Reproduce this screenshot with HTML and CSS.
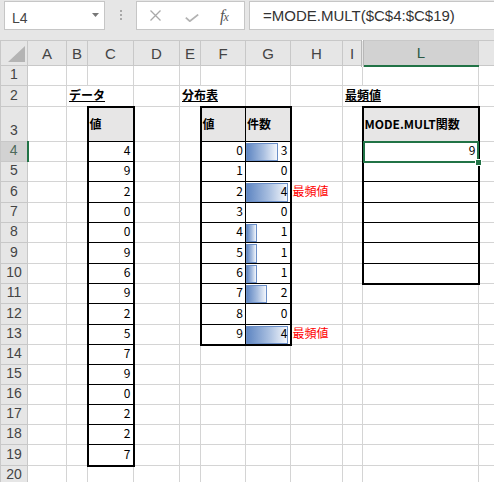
FILE: index.html
```html
<!DOCTYPE html>
<html lang="ja">
<head>
<meta charset="utf-8">
<title>MODE.MULT</title>
<link rel="stylesheet" href="styles.css">
</head>
<body>
<div class="toolbar">
  <div class="namebox"><span class="name">L4</span><svg class="dd" width="7" height="4" viewBox="0 0 7 4"><polygon points="0,0 7,0 3.5,4"/></svg></div>
  <div class="grip"><i></i><i></i><i></i></div>
  <div class="fbtns">
    <svg class="ic-x" width="11" height="11" viewBox="0 0 11 11"><path d="M0.5 0.5L10.5 10.5M10.5 0.5L0.5 10.5"/></svg>
    <svg class="ic-ok" width="14" height="8" viewBox="0 0 14 8"><path d="M0.8 3.6L4.8 7.2L13.2 0.6"/></svg>
    <span class="fx">f<span class="fxx">x</span></span>
  </div>
  <div class="formula">=MODE.MULT($C$4:$C$19)</div>
</div>
<table class="sheet">
  <colgroup>
    <col class="w-rh"><col class="w-a"><col class="w-b"><col class="w-c"><col class="w-d"><col class="w-e"><col class="w-f"><col class="w-g"><col class="w-h"><col class="w-i"><col class="w-l"><col class="w-m">
  </colgroup>
  <tr class="hdr">
    <th class="corner"><svg width="27" height="24" viewBox="0 0 27 24"><polygon points="7,21 24,21 24,5"/></svg></th>
    <th class="colh">A</th><th class="colh">B</th><th class="colh">C</th><th class="colh">D</th><th class="colh">E</th><th class="colh">F</th><th class="colh">G</th><th class="colh">H</th><th class="colh hid">I</th><th class="colh selc">L</th><th class="colh"></th>
  </tr>
  <tr class="h20"><th class="rh">1</th><td></td><td></td><td></td><td></td><td></td><td></td><td></td><td></td><td></td><td></td><td></td></tr>
  <tr class="h21"><th class="rh">2</th><td></td><td colspan="2" class="title">データ</td><td></td><td colspan="2" class="title">分布表</td><td></td><td></td><td colspan="2" class="title">最頻値</td><td></td></tr>
  <tr class="h35"><th class="rh">3</th><td></td><td></td><td class="tc hd bl br bt">値</td><td></td><td></td><td class="tc hd bl bt">値</td><td class="tc hd br bt">件数</td><td></td><td></td><td class="tc hd bl br bt">MODE.MULT関数</td><td></td></tr>
  <tr class="h20"><th class="rh sel">4</th><td></td><td></td><td class="tc n bl br">4</td><td></td><td></td><td class="tc n bl">0</td><td class="tc n br gb"><span class="bar" style="width:32px"></span><span class="v">3</span></td><td></td><td></td><td class="tc n bl br cur"><span class="selbox"></span><span class="handle"></span>9</td><td></td></tr>
  <tr class="h20"><th class="rh">5</th><td></td><td></td><td class="tc n bl br">9</td><td></td><td></td><td class="tc n bl">1</td><td class="tc n br gb"><span class="v">0</span></td><td></td><td></td><td class="tc bl br"></td><td></td></tr>
  <tr class="h21"><th class="rh">6</th><td></td><td></td><td class="tc n bl br">2</td><td></td><td></td><td class="tc n bl">2</td><td class="tc n br gb"><span class="bar" style="width:42px"></span><span class="v">4</span></td><td class="mode">最頻値</td><td></td><td class="tc bl br"></td><td></td></tr>
  <tr class="h20"><th class="rh">7</th><td></td><td></td><td class="tc n bl br">0</td><td></td><td></td><td class="tc n bl">3</td><td class="tc n br gb"><span class="v">0</span></td><td></td><td></td><td class="tc bl br"></td><td></td></tr>
  <tr class="h20"><th class="rh">8</th><td></td><td></td><td class="tc n bl br">0</td><td></td><td></td><td class="tc n bl">4</td><td class="tc n br gb"><span class="bar" style="width:11px"></span><span class="v">1</span></td><td></td><td></td><td class="tc bl br"></td><td></td></tr>
  <tr class="h21"><th class="rh">9</th><td></td><td></td><td class="tc n bl br">9</td><td></td><td></td><td class="tc n bl">5</td><td class="tc n br gb"><span class="bar" style="width:11px"></span><span class="v">1</span></td><td></td><td></td><td class="tc bl br"></td><td></td></tr>
  <tr class="h20"><th class="rh">10</th><td></td><td></td><td class="tc n bl br">6</td><td></td><td></td><td class="tc n bl">6</td><td class="tc n br gb"><span class="bar" style="width:11px"></span><span class="v">1</span></td><td></td><td></td><td class="tc bl br bb"></td><td></td></tr>
  <tr class="h20"><th class="rh">11</th><td></td><td></td><td class="tc n bl br">9</td><td></td><td></td><td class="tc n bl">7</td><td class="tc n br gb"><span class="bar" style="width:21px"></span><span class="v">2</span></td><td></td><td></td><td></td><td></td></tr>
  <tr class="h21"><th class="rh">12</th><td></td><td></td><td class="tc n bl br">2</td><td></td><td></td><td class="tc n bl">8</td><td class="tc n br gb"><span class="v">0</span></td><td></td><td></td><td></td><td></td></tr>
  <tr class="h20"><th class="rh">13</th><td></td><td></td><td class="tc n bl br">5</td><td></td><td></td><td class="tc n bl bb">9</td><td class="tc n br bb gb"><span class="bar" style="width:42px"></span><span class="v">4</span></td><td class="mode">最頻値</td><td></td><td></td><td></td></tr>
  <tr class="h20"><th class="rh">14</th><td></td><td></td><td class="tc n bl br">7</td><td></td><td></td><td></td><td></td><td></td><td></td><td></td><td></td></tr>
  <tr class="h20"><th class="rh">15</th><td></td><td></td><td class="tc n bl br">9</td><td></td><td></td><td></td><td></td><td></td><td></td><td></td><td></td></tr>
  <tr class="h20"><th class="rh">16</th><td></td><td></td><td class="tc n bl br">0</td><td></td><td></td><td></td><td></td><td></td><td></td><td></td><td></td></tr>
  <tr class="h20"><th class="rh">17</th><td></td><td></td><td class="tc n bl br">2</td><td></td><td></td><td></td><td></td><td></td><td></td><td></td><td></td></tr>
  <tr class="h20"><th class="rh">18</th><td></td><td></td><td class="tc n bl br">2</td><td></td><td></td><td></td><td></td><td></td><td></td><td></td><td></td></tr>
  <tr class="h21"><th class="rh">19</th><td></td><td></td><td class="tc n bl br bb">7</td><td></td><td></td><td></td><td></td><td></td><td></td><td></td><td></td></tr>
  <tr class="h20"><th class="rh">20</th><td></td><td></td><td></td><td></td><td></td><td></td><td></td><td></td><td></td><td></td><td></td></tr>
</table>
</body>
</html>
```
FILE: styles.css
```css
html, body {
  margin: 0;
  padding: 0;
  background: #ffffff;
  overflow: hidden;
}
body {
  width: 494px;
  height: 482px;
  font-family: "Liberation Sans", Arial, sans-serif;
}

/* ---------- formula bar ---------- */
.toolbar {
  height: 40px;
  box-sizing: border-box;
  padding-top: 1px;
  background: #e6e6e6;
  display: flex;
  align-items: flex-start;
}
.namebox {
  margin-left: 4px;
  width: 101px;
  height: 29px;
  box-sizing: border-box;
  background: #ffffff;
  border: 1px solid #c6c6c6;
  display: flex;
  align-items: center;
  justify-content: space-between;
  padding: 5px 5px 0 7px;
}
.name {
  font-size: 14px;
  color: #444444;
}
.dd {
  margin-top: -6px;
  fill: #777777;
}
.grip {
  margin-left: 15px;
  width: 2px;
  padding-top: 9px;
  display: flex;
  flex-direction: column;
  gap: 2px;
}
.grip i {
  display: block;
  width: 2px;
  height: 2px;
  background: #a8a8a8;
}
.fbtns {
  margin-left: 14px;
  width: 109px;
  height: 29px;
  box-sizing: border-box;
  background: #ffffff;
  border: 1px solid #c6c6c6;
  display: flex;
  align-items: center;
  padding-left: 13px;
}
.ic-x {
  fill: none;
  stroke: #a9a9a9;
  stroke-width: 1.3;
}
.ic-ok {
  margin-left: 24px;
  margin-top: 4px;
  fill: none;
  stroke: #b3b3b3;
  stroke-width: 1.8;
}
.fx {
  margin-left: 21px;
  font-family: "Liberation Serif", "Times New Roman", serif;
  font-style: italic;
  font-size: 16px;
  color: #555555;
  letter-spacing: -1px;
}
.fxx {
  font-size: 12px;
}
.formula {
  margin-left: 4px;
  flex: 1;
  height: 29px;
  box-sizing: border-box;
  background: #ffffff;
  border: 1px solid #c6c6c6;
  border-right: none;
  display: flex;
  align-items: center;
  padding-left: 13px;
  font-size: 15px;
  color: #333333;
  white-space: nowrap;
}

/* ---------- sheet ---------- */
.sheet {
  border-collapse: collapse;
  table-layout: fixed;
  width: 494px;
  font-family: "Noto Sans CJK JP", "Liberation Sans", sans-serif;
  font-size: 12px;
  color: #000000;
}
.w-rh { width: 27px; }
.w-a { width: 39px; }
.w-b { width: 21px; }
.w-c { width: 46px; }
.w-d { width: 46px; }
.w-e { width: 21px; }
.w-f { width: 45px; }
.w-g { width: 45px; }
.w-h { width: 52px; }
.w-i { width: 20px; }
.w-l { width: 116px; }
.w-m { width: 16px; }

.hdr { height: 25px; }
.h20 { height: 20px; }
.h21 { height: 21px; }
.h35 { height: 35px; }

.sheet td {
  box-sizing: border-box;
  border: 1px solid #d4d4d4;
  padding: 0 2px 4px 2px;
  line-height: 14px;
  vertical-align: bottom;
  white-space: nowrap;
  overflow: visible;
}
.sheet th {
  box-sizing: border-box;
  padding: 0;
  font-weight: normal;
}
.corner {
  background: #e6e6e6;
  border: 1px solid #c8c8c8;
  vertical-align: bottom;
}
.corner svg {
  display: block;
  fill: #b4b4b4;
}
.colh {
  background: #e6e6e6;
  border: 1px solid #c8c8c8;
  font-family: "Liberation Sans", Arial, sans-serif;
  font-size: 15px;
  color: #444444;
  text-align: center;
  vertical-align: middle;
}
.colh.hid {
  border-right: 3px double #b8b8b8;
}
.colh.selc {
  background: #d2d2d2;
  border-bottom: 2px solid #217346;
  color: #2c5a45;
}
.rh {
  background: #e6e6e6;
  border: 1px solid #c8c8c8;
  font-family: "Liberation Sans", Arial, sans-serif;
  font-size: 14px;
  line-height: 14px;
  color: #444444;
  text-align: center;
  vertical-align: bottom;
}
.sheet th.rh {
  padding-bottom: 4px;
}
.rh.sel {
  background: #d2d2d2;
  border-right: 2px solid #217346;
  color: #4d6a5b;
}

/* ---------- cell content ---------- */
.title {
  font-weight: bold;
  text-decoration: underline;
}
.sheet td.tc {
  border: 1px solid #000000;
}
.sheet td.bl { border-left: 2px solid #000000; }
.sheet td.br { border-right: 2px solid #000000; }
.sheet td.bt { border-top: 2px solid #000000; }
.sheet td.bb { border-bottom: 2px solid #000000; }
.sheet td.hd {
  background: #e7e6e6;
  font-weight: bold;
  vertical-align: middle;
  padding: 0 2px 0 1px;
}
.n {
  text-align: right;
}
.gb {
  position: relative;
}
.bar {
  position: absolute;
  left: 0;
  top: 1px;
  bottom: 0;
  box-sizing: border-box;
  border: 1px solid #6b8fc8;
  background: linear-gradient(to right, #5f86c2 0%, #a9bfe0 55%, #f4f7fc 100%);
}
.v {
  position: relative;
}
.mode {
  color: #ff0000;
}
.sheet td.mode {
  padding-left: 1px;
}
.cur {
  position: relative;
}
.selbox {
  position: absolute;
  left: -1px;
  top: -1px;
  right: -1px;
  bottom: -2px;
  border: 2px solid #217346;
}
.handle {
  position: absolute;
  right: -4px;
  bottom: -5px;
  width: 5px;
  height: 5px;
  background: #217346;
  border: 1px solid #ffffff;
}
```
